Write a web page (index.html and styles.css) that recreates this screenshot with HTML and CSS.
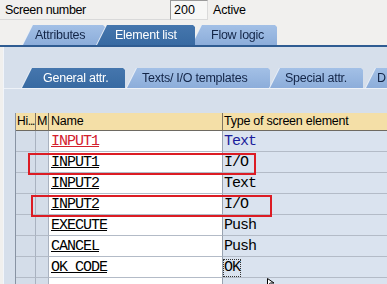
FILE: index.html
```html
<!DOCTYPE html>
<html>
<head>
<meta charset="utf-8">
<link rel="stylesheet" href="styles.css">
</head>
<body>
<div class="top">
  <span class="label">Screen number</span>
  <span class="field">200</span>
  <span class="status">Active</span>
</div>
<div class="tabstrip outer">
  <div class="tabwrap"><div class="tab t-attr">Attributes</div></div>
  <div class="tabwrap active w-elem"><div class="tab t-elem">Element list</div></div>
  <div class="tabwrap w-flow"><div class="tab t-flow">Flow logic</div></div>
</div>
<div class="panel">
  <div class="tabstrip inner">
    <div class="tabwrap active"><div class="tab t-gen">General attr.</div></div>
    <div class="tabwrap w-texts"><div class="tab t-texts">Texts/ I/O templates</div></div>
    <div class="tabwrap"><div class="tab t-spec">Special attr.</div></div>
    <div class="tabwrap w-d"><div class="tab t-d">D</div></div>
  </div>
  <div class="content">
    <div class="grid">
      <div class="row head">
        <div class="c c1"><span class="hi">Hi</span><span class="dots">...</span></div><div class="c c2">M</div><div class="c c3">Name</div><div class="c c4">Type of screen element</div>
      </div>
      <div class="row"><div class="c c1"></div><div class="c c2"></div><div class="c c3 mono red">INPUT1</div><div class="c c4 mono blue">Text</div></div>
      <div class="row"><div class="c c1"></div><div class="c c2"></div><div class="c c3 mono">INPUT1</div><div class="c c4 mono">I/O</div></div>
      <div class="row"><div class="c c1"></div><div class="c c2"></div><div class="c c3 mono">INPUT2</div><div class="c c4 mono">Text</div></div>
      <div class="row"><div class="c c1"></div><div class="c c2"></div><div class="c c3 mono">INPUT2</div><div class="c c4 mono">I/O</div></div>
      <div class="row"><div class="c c1"></div><div class="c c2"></div><div class="c c3 mono">EXECUTE</div><div class="c c4 mono">Push</div></div>
      <div class="row"><div class="c c1"></div><div class="c c2"></div><div class="c c3 mono">CANCEL</div><div class="c c4 mono">Push</div></div>
      <div class="row"><div class="c c1"></div><div class="c c2"></div><div class="c c3 mono">OK_CODE</div><div class="c c4 mono"><span class="focus">OK</span></div></div>
      <div class="row last"><div class="c c1"></div><div class="c c2"></div><div class="c c3"></div><div class="c c4"></div></div>
      <div class="redbox box1"></div>
      <div class="redbox box2"></div>
      <svg class="cursor" width="10" height="8" viewBox="0 0 10 8"><path d="M0.5 0.5 L0.5 7.5 L3.5 5 L7 5 Z" fill="#fff" stroke="#000" stroke-width="1"/></svg>
    </div>
  </div>
</div>
</body>
</html>
```
FILE: styles.css
```css
html, body {
  margin: 0;
  padding: 0;
  background: #f1f0ee;
  font-family: "Liberation Sans", Arial, sans-serif;
  font-size: 12px;
  color: #000;
  overflow: hidden;
  height: 284px;
}

.top {
  height: 22px;
  display: flex;
  align-items: flex-start;
}
.label {
  box-sizing: border-box;
  width: 170px;
  height: 20px;
  padding: 3px 0 0 5px;
  border-bottom: 1px solid #d9d9d9;
  font-size: 12.5px;
  letter-spacing: -0.35px;
}
.field {
  box-sizing: border-box;
  width: 38px;
  height: 20px;
  padding: 2px 0 0 3px;
  border: 1px solid;
  border-color: #9a9a9a #dadada #dadada #9a9a9a;
  background: #f7f7f6;
  font-size: 12.5px;
}
.status {
  padding: 3px 0 0 5px;
  font-size: 12.5px;
  letter-spacing: -0.2px;
}

.tabstrip {
  display: flex;
  align-items: flex-end;
}
.outer {
  height: 23px;
  padding-left: 23px;
  border-bottom: 2px solid #2f5c92;
}
.tabwrap {
  position: relative;
  filter: drop-shadow(-1px 0 0 #e9eff7);
}
.tabwrap.active {
  z-index: 2;
}
.tab {
  box-sizing: border-box;
  height: 20px;
  line-height: 20px;
  white-space: nowrap;
  clip-path: polygon(10px 0, calc(100% - 2px) 0, 100% 2px, 100% 100%, 0 100%);
  background: linear-gradient(#a3c0e6, #8cadda);
  color: #132547;
  font-size: 12.5px;
  letter-spacing: -0.25px;
}
.active .tab {
  background: linear-gradient(#4576ad, #386aa2);
  color: #fff;
}
.t-attr { width: 82px; padding-left: 12px; }
.w-elem { margin-left: -8px; }
.t-elem { width: 98px; padding-left: 18px; }
.w-flow { margin-left: -3px; }
.t-flow { width: 85px; padding-left: 19px; }

.panel {
  margin-left: 3px;
  border-left: 1px solid #f2f5fa;
  background: #d6dfeb;
  height: 237px;
  padding-top: 21px;
  box-sizing: border-box;
  overflow: hidden;
}
.inner {
  height: 20px;
  padding-left: 18px;
  border-bottom: 1px solid #eef2f8;
}
.t-gen { width: 103px; padding-left: 21px; }
.w-texts { margin-left: 2px; }
.t-texts { width: 143px; padding-left: 15px; }
.t-spec { width: 93px; padding-left: 15px; }
.w-d { margin-left: 3px; }
.t-d { width: 40px; padding-left: 11px; }

.content {
  padding: 24px 0 0 11px;
}
.grid {
  position: relative;
  border-left: 1px solid #8893a3;
}
.row {
  display: grid;
  grid-template-columns: 20px 13px 174px 1fr;
  height: 21px;
}
.row.last { height: 6px; overflow: hidden; }
.c {
  box-sizing: border-box;
  height: 21px;
  border-bottom: 1px solid #b3bbc7;
  border-right: 1px solid #a9b2c0;
  white-space: nowrap;
  overflow: hidden;
}
.c1, .c2 { background: #d4dde9; }
.c3 { background: #fff; padding-left: 2px; border-right-color: #98a2b0; }
.c4 { background: #dae3ef; padding-left: 1px; border-right: 0; }

.head {
  height: 18px;
}
.head .c {
  height: 18px;
  line-height: 17px;
  background: #f4dfa7;
  border-right: 1px solid #7f7462;
  border-bottom: 1px solid #6e6a62;
  font-size: 12.5px;
  letter-spacing: -0.25px;
  overflow: visible;
}
.head .c1 { padding-left: 1px; font-size: 12px; }
.head .c1 .dots { letter-spacing: -1.2px; }
.head .c2 { padding-left: 1px; }
.head .c4 { border-right: 0; }

.mono {
  font-family: "Liberation Mono", "Courier New", monospace;
  font-size: 15px;
  letter-spacing: -1px;
  line-height: 22px;
}
.c3.mono { text-decoration: underline; text-underline-offset: 1px; }
.red { color: #d3202e; }
.blue { color: #1b1d9c; }
.focus {
  outline: 1px dotted #333;
  outline-offset: -1px;
  display: inline-block;
  line-height: 18px;
  padding: 0 1px;
  margin-left: -1px;
}

.redbox {
  position: absolute;
  box-sizing: border-box;
  border: 2px solid #dc1c24;
  height: 22px;
}
.box1 { left: 12px; top: 40px; width: 228px; }
.box2 { left: 15px; top: 82px; width: 241px; }
.cursor {
  position: absolute;
  left: 251px;
  top: 165px;
}
```
